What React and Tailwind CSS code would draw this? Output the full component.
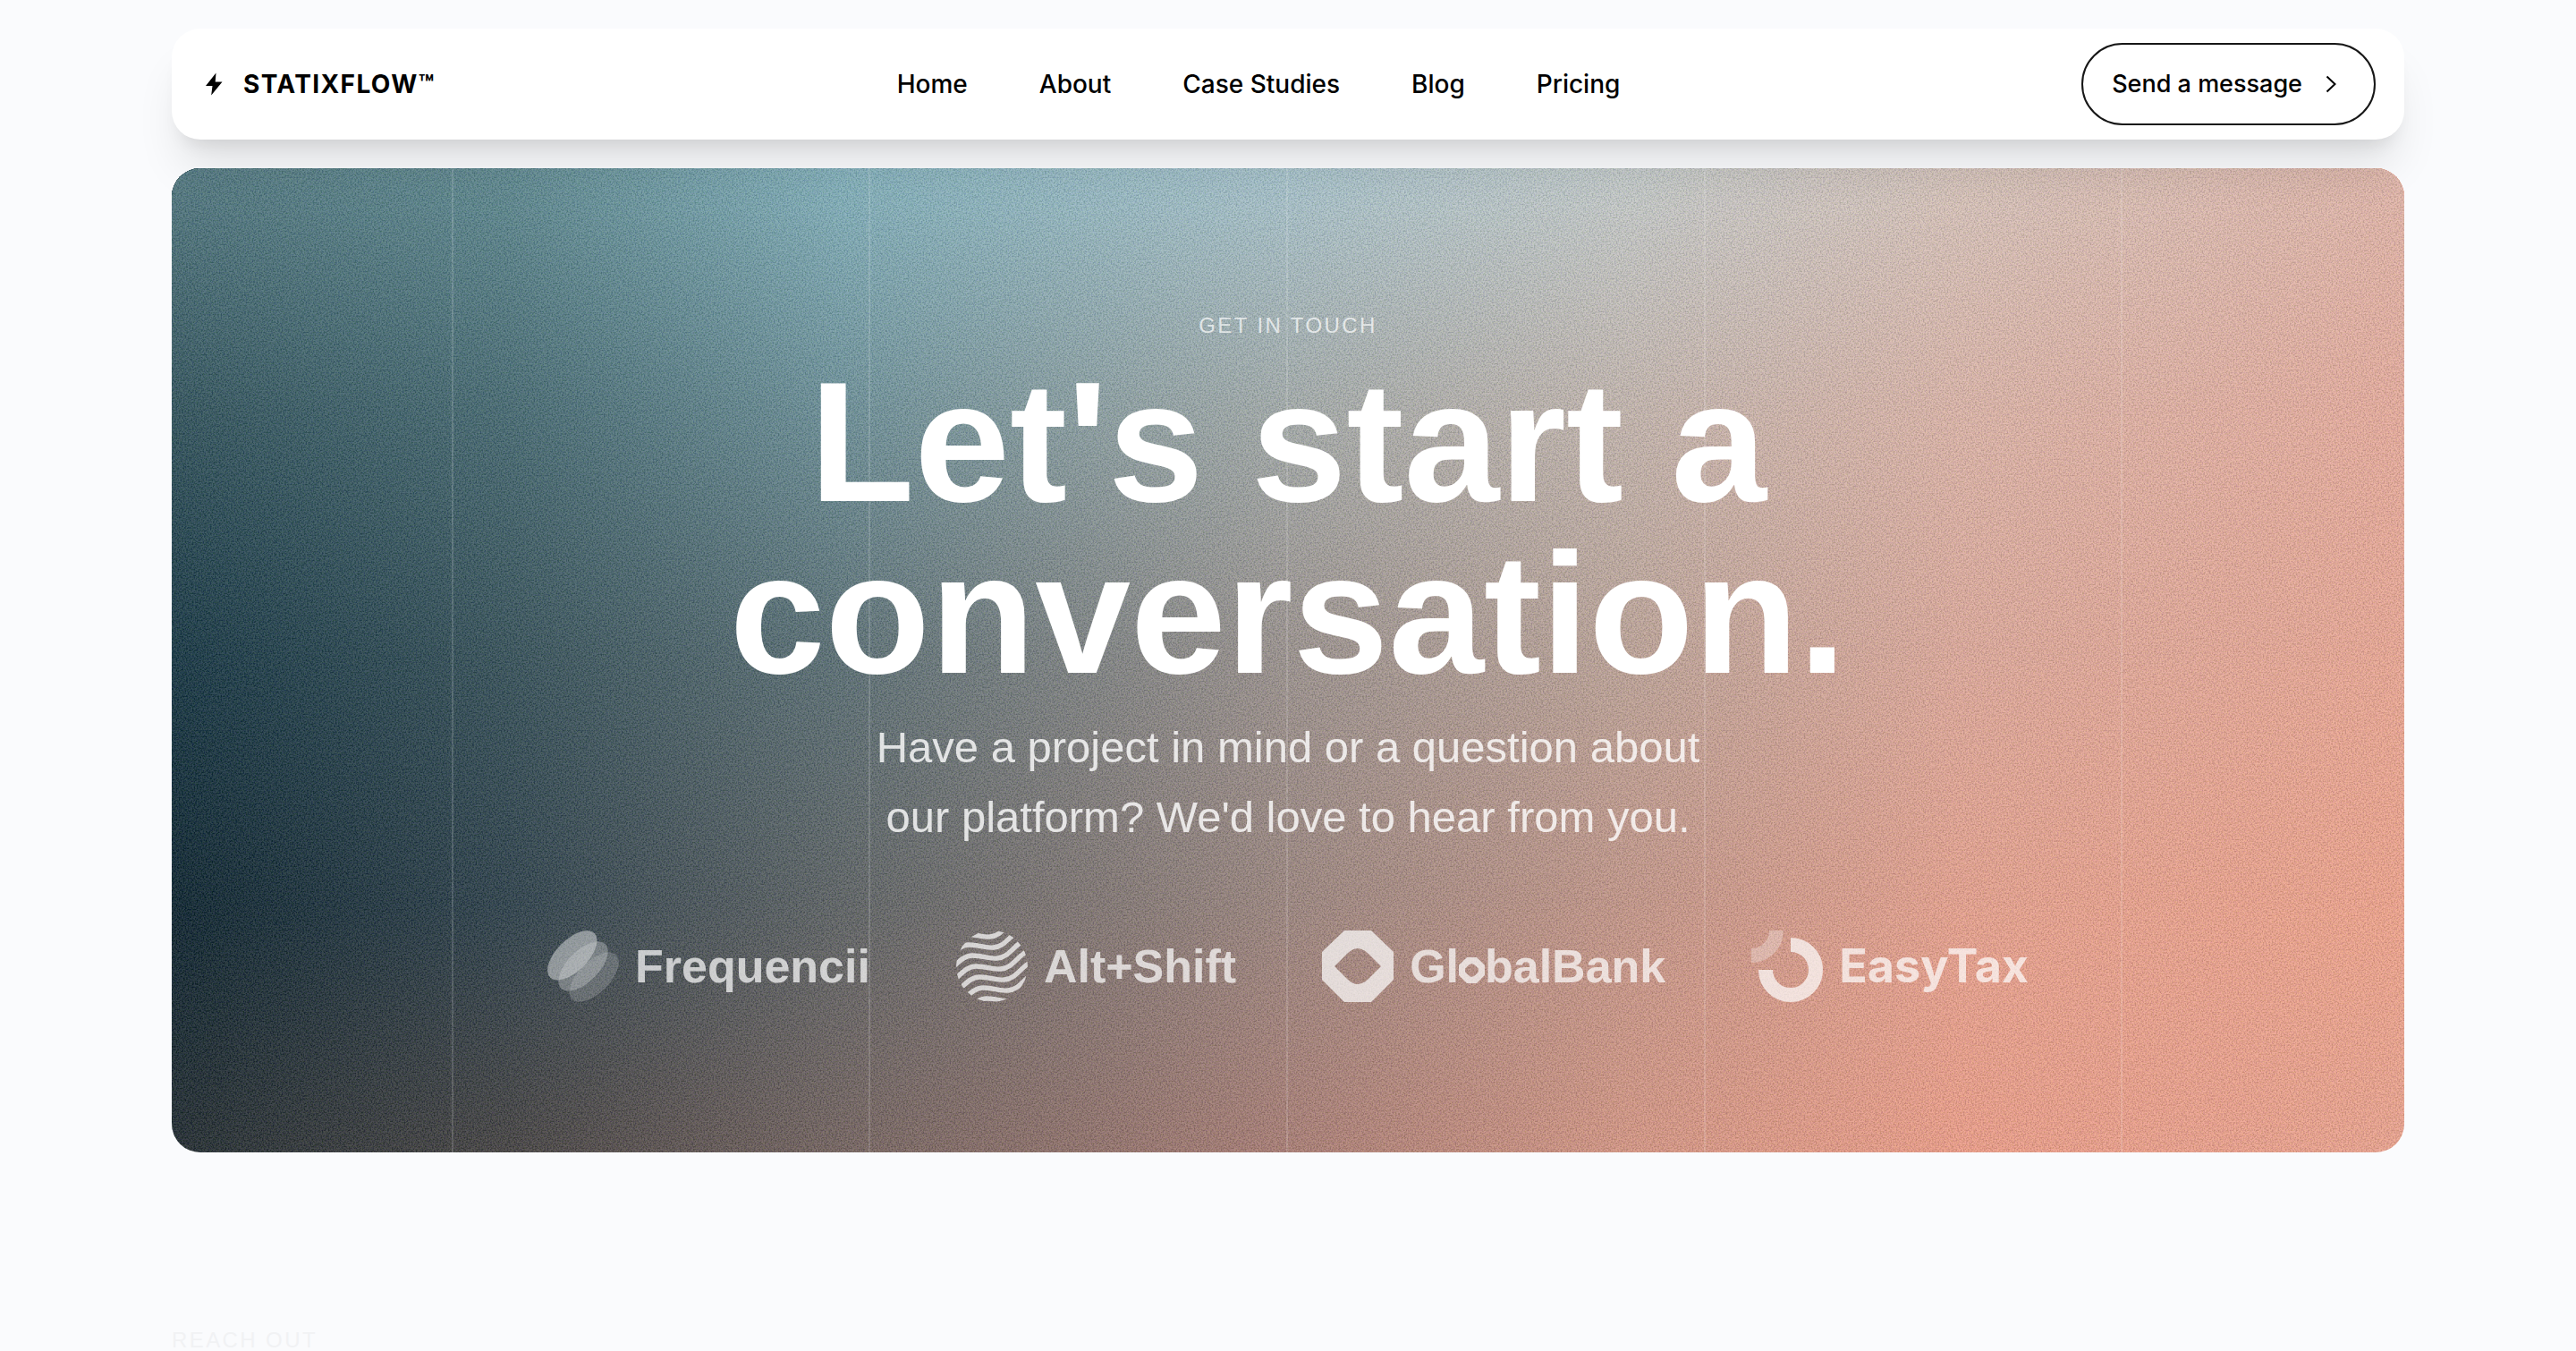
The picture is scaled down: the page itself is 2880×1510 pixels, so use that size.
const NAV_LINKS = ["Home", "About", "Case Studies", "Blog", "Pricing"];

// each band fades into the one painted before it, bottom of the card first
const BANDS = [
  "bg-[linear-gradient(90deg,#192328_0%,#3d3a3a_15%,#6f5d59_30%,#a7786f_50%,#d5927f_65%,#ee9a84_80%,#eca08b_100%)]",
  "bg-[linear-gradient(90deg,#021a26_0%,#243843_15%,#575c5e_30%,#99817a_50%,#c29284_65%,#e79e8a_80%,#f0a088_100%)] [mask-image:linear-gradient(#000_75%,transparent_100%)]",
  "bg-[linear-gradient(90deg,#0c2d3b_0%,#2d4952_15%,#54696f_30%,#988e8a_50%,#bba094_65%,#dea697_80%,#eba490_100%)] [mask-image:linear-gradient(#000_50%,transparent_75%)]",
  "bg-[linear-gradient(90deg,#284b55_0%,#3e636c_15%,#668b94_30%,#a1a8a7_50%,#c2b3ab_65%,#dcb2a5_80%,#e8a999_100%)] [mask-image:linear-gradient(#000_25%,transparent_50%)]",
  "bg-[linear-gradient(90deg,#4c747d_0%,#59868e_15%,#7fb0bc_30%,#a5c3cd_50%,#c3cbcb_65%,#d6c3ba_80%,#e1b4a7_100%)] [mask-image:linear-gradient(#000_0%,transparent_25%)]",
];

const WAVES = [-2, -1, 0, 1, 2, 3, 4];

function Bolt() {
  return (
    <svg viewBox="0 0 32 32" className="size-8" fill="currentColor" aria-hidden="true">
      <path d="M17.5 3.5 6 18h7.5l-1.3 10.5L24.5 13.5h-7.8z" />
    </svg>
  );
}

function FrequenciiMark() {
  return (
    <svg viewBox="0 0 80 80" className="size-20" fill="#fff" aria-hidden="true">
      <ellipse cx="52.2" cy="52.2" rx="35" ry="17.5" transform="rotate(-45 52.2 52.2)" opacity="0.25" />
      <ellipse cx="40" cy="40" rx="35" ry="17.5" transform="rotate(-45 40 40)" opacity="0.4" />
      <ellipse cx="27.8" cy="27.8" rx="35" ry="17.5" transform="rotate(-45 27.8 27.8)" opacity="0.6" />
    </svg>
  );
}

function AltShiftMark() {
  return (
    <svg viewBox="0 0 80 80" className="size-20" fill="none" stroke="#fff" strokeWidth="5.4" aria-hidden="true">
      <clipPath id="altshift-disc">
        <circle cx="40" cy="40" r="40" />
      </clipPath>
      <g clipPath="url(#altshift-disc)">
        {WAVES.map((k) => (
          <path
            key={k}
            d="M-18 50C-4 46 4 28 18 28S33 32 46 31S64 17 76 11S90 16 102 14"
            transform={`translate(${k * 4} ${k * 12})`}
          />
        ))}
      </g>
    </svg>
  );
}

function GlobalBankMark({ className }) {
  return (
    <svg viewBox="0 0 80 80" className={className} fill="#fff" fillRule="evenodd" aria-hidden="true">
      <path d="M25 0h30l25 24v31L55 80H25L0 55V24zM14 40l14 14q6 6 12 6t12-6l14-14-14-14q-6-6-12-6t-12 6z" />
    </svg>
  );
}

function EasyTaxMark() {
  return (
    <svg viewBox="0 0 80 80" className="size-20" fill="none" stroke="#fff" strokeWidth="16" aria-hidden="true">
      <path d="M28 0A28 28 0 0 1 0 28" opacity="0.4" />
      <path d="M44 16A28 28 0 1 1 16 44" />
    </svg>
  );
}

const BRANDS = [
  { id: "frequencii", mark: <FrequenciiMark />, name: "Frequencii" },
  { id: "altshift", mark: <AltShiftMark />, name: "Alt+Shift" },
  {
    id: "globalbank",
    mark: <GlobalBankMark className="size-20" />,
    // the first "o" wears the octagon of the mark
    name: (
      <>
        Gl
        <span className="relative font-normal">
          o
          <GlobalBankMark className="absolute inset-x-0 bottom-2.5 w-full" />
        </span>
        balBank
      </>
    ),
  },
  { id: "easytax", mark: <EasyTaxMark />, name: <span className="font-[Inter,sans-serif]">EasyTax</span> },
];

function Header() {
  return (
    <header className="relative z-10 flex items-center justify-between rounded-[32px] bg-white px-8 py-4 font-[Inter,sans-serif] text-[28px] leading-10 text-black shadow-[0_40px_50px_-10px_rgba(0,0,0,0.1),0_16px_20px_-12px_rgba(0,0,0,0.1)]">
      <a href="#" className="flex items-center gap-4 font-bold tracking-wider">
        <Bolt />
        STATIXFLOW™
      </a>
      <nav className="flex items-center gap-20 font-medium">
        {NAV_LINKS.map((label) => (
          <a key={label} href="#" className="hover:opacity-70">
            {label}
          </a>
        ))}
      </nav>
      <button className="flex items-center gap-4 rounded-full border-2 border-[#171717] px-8 py-6 text-[27px] font-medium">
        Send a message
        <svg viewBox="0 0 32 32" className="size-8" fill="none" stroke="currentColor" strokeWidth="2" aria-hidden="true">
          <path d="m11.5 7.5 9 8.5-9 8.5" />
        </svg>
      </button>
    </header>
  );
}

function HeroBackdrop() {
  return (
    <div className="absolute inset-0" aria-hidden="true">
      {BANDS.map((band) => (
        <div key={band} className={`absolute inset-0 ${band}`} />
      ))}
      <svg className="absolute inset-0 size-full opacity-15">
        <filter id="grain" x="0" y="0" width="100%" height="100%" colorInterpolationFilters="sRGB">
          <feTurbulence type="fractalNoise" baseFrequency="0.6" numOctaves="3" seed="4" />
          <feColorMatrix values="2.4 0.4 0 0 -0.72  1.9 0.9 0 0 -0.72  1.9 0 0.9 0 -0.72  0 0 0 0 1" />
        </filter>
        <rect width="100%" height="100%" filter="url(#grain)" />
      </svg>
      <div className="absolute inset-y-0 -inset-x-38 grid grid-cols-6">
        {[1, 2, 3, 4, 5].map((n) => (
          <div key={n} className="border-r-2 border-white/15" />
        ))}
      </div>
    </div>
  );
}

function Hero() {
  return (
    <section className="relative mt-8 overflow-hidden rounded-[32px] pt-40 pb-42">
      <HeroBackdrop />
      <div className="relative flex flex-col items-center text-center text-white">
        <p className="text-2xl tracking-widest text-white/70 uppercase">Get in touch</p>
        <h1 className="mt-[18px] max-w-7xl text-[192px] leading-none font-bold">Let's start a conversation.</h1>
        <p className="mt-3.5 max-w-[960px] text-[49px] leading-[78px] text-white/80">
          Have a project in mind or a question about our platform? We'd love to hear from you.
        </p>
        <ul className="mt-22 flex items-center gap-24 opacity-70">
          {BRANDS.map((brand) => (
            <li key={brand.id} className="flex items-center gap-[18px] text-[52px] leading-none font-bold">
              {brand.mark}
              <span>{brand.name}</span>
            </li>
          ))}
        </ul>
      </div>
    </section>
  );
}

export default function App() {
  return (
    <div className="min-h-screen bg-[#fafbfd] font-['Liberation_Sans',Arial,sans-serif]">
      <main className="mx-auto max-w-[2560px] px-8 pt-8">
        <Header />
        <Hero />
        <section className="pt-49">
          <p className="text-2xl leading-7 tracking-widest text-[#f1f2f4] uppercase">Reach out</p>
        </section>
      </main>
    </div>
  );
}
